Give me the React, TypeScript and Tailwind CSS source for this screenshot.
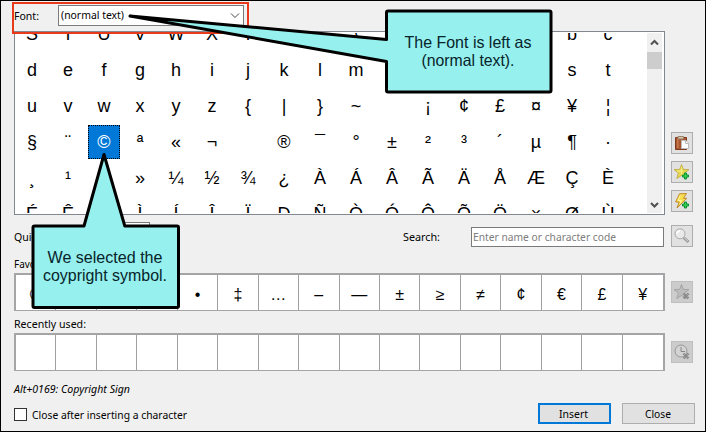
import type { ReactNode } from "react";

const ui = "font-['Noto_Sans','Open_Sans',sans-serif]";
const arial = "font-['Liberation_Sans',Arial,sans-serif]";

const rows: string[] = [
  "STUVWXYZ[\\]^_`abc",
  "defghijklmnopqrst",
  "uvwxyz{|}~\u00a0¡¢£¤¥¦",
  "§¨©ª«¬\u00a0®¯°±²³´µ¶·",
  "¸¹º»¼½¾¿ÀÁÂÃÄÅÆÇÈ",
  "ÉÊËÌÍÎÏÐÑÒÓÔÕÖ×ØÙ",
];
const favorites = Array.from("©®™°•‡…–—±≥≠¢€£¥");

function Text({ children, w, className = "" }: { children: string; w: number; className?: string }) {
  return (
    <svg width={w} height={16} className={`block shrink-0 overflow-visible ${className}`}>
      <text x={0} y={12} textLength={w} lengthAdjust="spacingAndGlyphs" fill="currentColor">
        {children}
      </text>
    </svg>
  );
}

function Tool({ children, disabled = false }: { children: ReactNode; disabled?: boolean }) {
  return (
    <button
      className={`flex h-[22px] w-[22px] shrink-0 items-center justify-center border ${
        disabled ? "border-[#bfbfbf] bg-[#cccccc]" : "border-[#adadad] bg-[#e1e1e1]"
      }`}
    >
      <svg width="16" height="16" viewBox="0 0 16 16">
        {children}
      </svg>
    </button>
  );
}

const Plus = () => (
  <path d="M10.5 9h2v2h2v2h-2v2h-2v-2h-2v-2h2z" fill="#35cf55" stroke="#0d9030" strokeWidth="1" />
);
const Cross = () => (
  <path d="M9.5 9.5l5 5M14.5 9.5l-5 5" stroke="#858585" strokeWidth="2.4" strokeDasharray="1.4 .4" />
);

function Cells({ items }: { items: string[] }) {
  return (
    <div className="grid h-[38px] w-[651px] grid-cols-[repeat(16,minmax(0,1fr))] border-x-2 border-b border-t-2 border-[#a5a5a8] bg-white">
      {Array.from({ length: 16 }, (_, i) => (
        <div
          key={i}
          className={`flex items-center justify-center border-r border-[#a0a0a0] pt-[4px] text-[16px] leading-none last:border-r-0 ${arial}`}
        >
          {items[i] ?? ""}
        </div>
      ))}
    </div>
  );
}

export default function App() {
  return (
    <div className={`relative h-[432px] w-[706px] overflow-hidden border border-black bg-[#f0f0f0] pl-[13px] text-[11.5px] text-black ${ui}`}>
      <div className="flex h-[30px] items-start">
        <Text w={25} className="mt-[7px]">Font:</Text>
        <div className="ml-[19px] mt-1 flex h-[21px] w-[186px] items-center justify-between border border-[#7a7a7a] bg-white pl-[2px] pr-[3px]">
          <Text w={63} className="mb-[2px]">(normal text)</Text>
          <svg width="10" height="6" viewBox="0 0 10 6" fill="none" stroke="#444">
            <path d="M1 .5l4 4 4-4" />
          </svg>
        </div>
      </div>

      <div className="flex h-[184px]">
        <div className="flex h-[184px] w-[651px] shrink-0 justify-between border border-[#828790] bg-white py-px pr-[2px]">
          <div className="h-[180px] w-[613px] overflow-hidden">
            <div className="-ml-px -mt-[17px] grid w-[612px] grid-cols-[repeat(17,36px)]">
              {rows.flatMap((row, r) =>
                Array.from(row).map((ch, c) => (
                  <div key={`${r}-${c}`} className="flex h-9 items-center justify-center">
                    <div
                      className={`flex h-[34px] w-8 items-center justify-center text-[18px] leading-none ${arial} ${
                        ch === "©" ? "border border-dotted border-black bg-[#0078d7] text-white" : ""
                      }`}
                    >
                      {ch}
                    </div>
                  </div>
                )),
              )}
            </div>
          </div>
          <div className="flex h-[180px] w-[15px] flex-col items-center bg-[#f0f0f0]">
            <svg width="15" height="19" fill="none" stroke="#505050" strokeWidth="2">
              <path d="M4 11.5l3.5-3.5 3.5 3.5" />
            </svg>
            <div className="h-[17px] w-[15px] bg-[#cdcdcd]" />
            <svg width="15" height="17" fill="none" stroke="#505050" strokeWidth="2" className="mt-auto">
              <path d="M4 7l3.5 3.5L11 7" />
            </svg>
          </div>
        </div>
        <div className="ml-[6px] flex flex-col justify-end gap-[7px] pb-[3px]">
          <Tool>
            <path d="M1.5 2.5h11v12h-11z" fill="#a85532" stroke="#7d3a1e" />
            <path d="M3 4h1.5v9H3z" fill="#c9784c" />
            <path d="M4 1.5h5.5v2.5H4z" fill="#d6cab4" stroke="#987f62" />
            <path d="M7.5 5.5h4.5l2.5 2.5v5.5h-7z" fill="#fff" stroke="#bbb" />
            <path d="M11.5 5.5v3h3" fill="none" stroke="#bbb" />
          </Tool>
          <Tool>
            <path d="M7.5 .5l1.8 4.9 5.7.2-4.4 3.3 1.5 5.6-4.6-3-4.7 3 1.6-5.5L0 5.6l5.7-.2z" fill="#e6d94f" stroke="#bfa63a" strokeWidth=".8" />
            <path d="M7.5 3v7M3 7h6" stroke="#f6f08c" />
            <Plus />
          </Tool>
          <Tool>
            <path d="M5.5.8l7-.3-3 4.8h3.4L3 15l2.2-6H1.6z" fill="#f5dc50" stroke="#c08b2c" />
            <path d="M6.3 2.3L4 7.5h3.2L6 10.5" stroke="#fff6a0" fill="none" />
            <Plus />
          </Tool>
        </div>
      </div>

      <div className="flex h-8 items-start pt-[7px]">
        <Text w={83} className="mt-[7px]">Quick browse to:</Text>
        <div className="h-[21px] w-[53px] border border-[#7a7a7a] bg-white" />
        <Text w={37} className="ml-[253px] mt-[7px]">Search:</Text>
        <div className="ml-[31px] mt-[5px] flex h-5 w-[193px] items-center border border-[#7a7a7a] bg-white pl-[1px] text-[#7d7d7d]">
          <Text w={143} className="mb-[1px]">Enter name or character code</Text>
        </div>
        <div className="ml-[7px] mt-[3px]">
          <Tool>
            <path d="M9.5 9.5l5 4.5" stroke="#999" strokeWidth="3" />
            <path d="M10 9.5l4 3.7" stroke="#ddd" />
            <circle cx="6" cy="5.8" r="5" fill="#e9e9e9" stroke="#aaa" />
            <path d="M3 6a3 3 0 0 1 3-3" fill="none" stroke="#fff" strokeWidth="1.5" />
          </Tool>
        </div>
      </div>

      <div className="flex h-[26px] items-center pt-[6px]">
        <Text w={45} className="mt-[2px]">Favorites:</Text>
      </div>
      <div className="flex h-[38px] items-center gap-[6px]">
        <Cells items={favorites} />
        <Tool disabled>
          <path d="M7.5.5l1.8 4.9 5.7.2-4.4 3.3 1.5 5.6-4.6-3-4.7 3 1.6-5.5L0 5.6l5.7-.2z" fill="#bdbdbd" stroke="#a5a5a5" />
          <Cross />
        </Tool>
      </div>
      <div className="flex h-[22px] items-end pb-[1px]">
        <Text w={72}>Recently used:</Text>
      </div>
      <div className="flex h-[38px] items-center gap-[6px]">
        <Cells items={[]} />
        <Tool disabled>
          <circle cx="7" cy="7" r="6" fill="#d3d3d3" stroke="#999" />
          <path d="M7 3v4.5h4" fill="none" stroke="#888" />
          <Cross />
        </Tool>
      </div>

      <div className="flex h-[32px] items-center pt-[4px] italic">
        <Text w={116}>Alt+0169: Copyright Sign</Text>
      </div>
      <div className="flex h-[21px]">
        <div className="mt-[5px] h-[13px] w-[13px] border border-[#333] bg-white" />
        <Text w={155} className="ml-[5px] mt-[4px]">Close after inserting a character</Text>
        <button className="ml-[351px] flex h-[21px] w-[73px] items-center justify-center border-2 border-[#0078d7] bg-[#e1e1e1] pr-[2px]">
          <Text w={29}>Insert</Text>
        </button>
        <button className="ml-[11px] flex h-[21px] w-[73px] items-center justify-center border border-[#adadad] bg-[#e1e1e1] pr-[2px]">
          <Text w={26}>Close</Text>
        </button>
      </div>

      <div className="absolute left-[11px] top-[1px] h-[32px] w-[237px] border-2 border-[#e8391b]" />
      <svg className={`absolute -left-px -top-px ${arial}`} width="706" height="432" viewBox="0 0 706 432" fontSize="16.5" textAnchor="middle">
        <g fill="#96f0ed" stroke="#000" strokeWidth="3" strokeLinejoin="round">
          <path d="M130 16L386.5 39.5V12.5Q386.5 11 388 11H549.5Q551 11 551 12.5V90.5Q551 92 549.5 92H388Q386.500 92 386.5 90.5V61.5Z" />
          <path d="M104 154.5L124.8 226H177Q178.5 226 178.5 227.5V306Q178.5 307.5 177 307.5H34.5Q33 307.5 33 306V227.5Q33 226 34.5 226H84Z" />
        </g>
        <g fill="#06252b">
          <text x="468" y="48" textLength="127" lengthAdjust="spacingAndGlyphs">The Font is left as</text>
          <text x="468" y="66" textLength="93" lengthAdjust="spacingAndGlyphs">(normal text).</text>
          <text x="105" y="263" textLength="115" lengthAdjust="spacingAndGlyphs">We selected the</text>
          <text x="105" y="281" textLength="124" lengthAdjust="spacingAndGlyphs">coypright symbol.</text>
        </g>
      </svg>
    </div>
  );
}
